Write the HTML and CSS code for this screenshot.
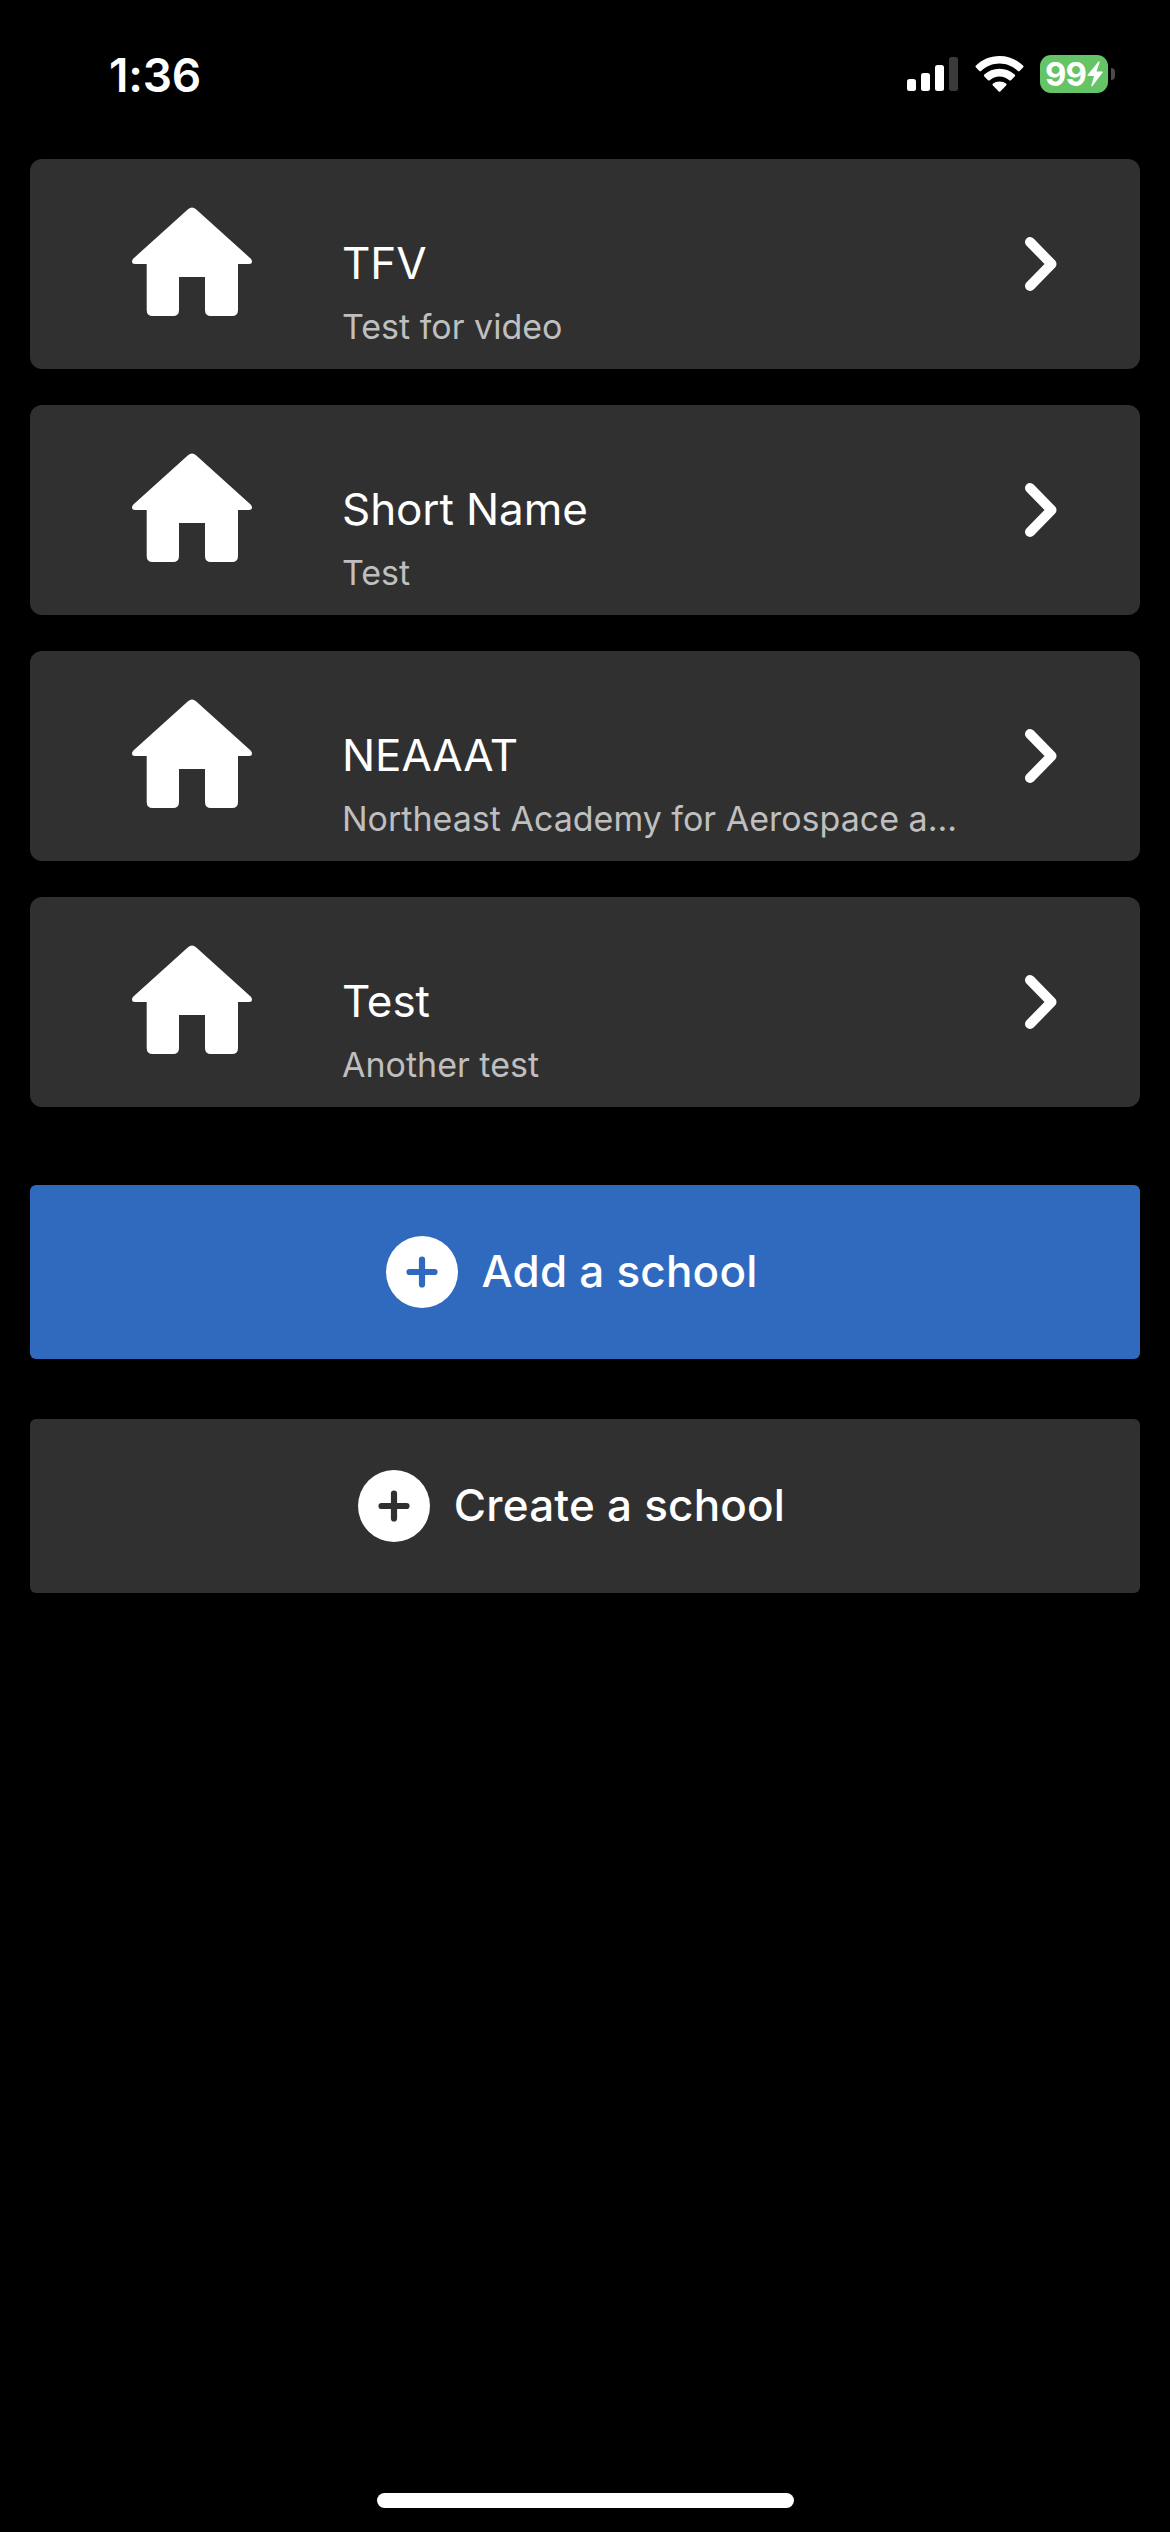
FILE: index.html
```
<!DOCTYPE html>
<html lang="en">
<head>
    <meta charset="UTF-8">
    <title>Schools</title>
    <link rel="stylesheet" href="styles.css">
</head>
<body>
    <!-- shared icons -->
    <svg class="icon-defs" width="0" height="0">
        <symbol id="icon-home" viewBox="0 0 120 110">
            <path d="M56 2.2Q60 -1.2 64 2.2L118.600 51.500Q120 53 120 54.500Q120 57 117 57H106V103Q106 109 100 109H79Q73 109 73 103V70H47V103Q47 109 41 109H20.700Q14.700 109 14.700 103V57H3Q0 57 0 54.500Q0 53 1.400 51.500Z"/>
        </symbol>
        <symbol id="icon-chevron" viewBox="0 0 34 56">
            <path d="M6 6L27.500 28L6 50" fill="none" stroke="#fff" stroke-width="10" stroke-linecap="round" stroke-linejoin="round"/>
        </symbol>
        <symbol id="icon-plus" viewBox="0 0 72 72">
            <circle cx="36" cy="36" r="36" fill="#fff"/>
            <path d="M36 23.500V48.500M23.500 36H48.500" fill="none" stroke="currentColor" stroke-width="6.200" stroke-linecap="round"/>
        </symbol>
    </svg>

    <header class="status-bar">
        <span class="time">1:36</span>
        <div class="status-icons">
            <svg class="signal" viewBox="0 0 52 36">
                <rect x="0" y="23" width="9" height="12" rx="2.500"/>
                <rect x="14" y="17" width="9" height="18" rx="2.500"/>
                <rect x="28" y="9" width="9" height="26" rx="2.500"/>
                <rect class="dim" x="42" y="1" width="9" height="34" rx="2.500"/>
            </svg>
            <svg class="wifi" viewBox="0 0 49 36">
                <path d="M24.500 0C34 0 42 3.700 48 9.600Q49 10.600 48 11.600L44.600 15Q43.800 15.700 42.900 15C37.700 10.300 31.300 7.600 24.500 7.600S11.300 10.300 6.100 15Q5.200 15.700 4.400 15L1 11.600Q0 10.600 1 9.600C7 3.700 15 0 24.500 0Z"/>
                <path d="M24.500 12.800C30.600 12.800 35.800 15 39.700 18.600Q40.700 19.500 39.700 20.500L36 24.200Q35.200 25 34.300 24.200C31.500 21.900 28.200 20.500 24.500 20.500S17.500 21.900 14.700 24.200Q13.800 25 13 24.200L9.300 20.500Q8.300 19.500 9.300 18.600C13.200 15 18.400 12.800 24.500 12.800Z"/>
                <path d="M24.500 25.600C27.100 25.600 29.200 26.300 31 27.600Q32 28.500 31.100 29.500L25.500 35.200Q24.500 36.200 23.500 35.200L17.900 29.500Q17 28.500 18 27.600C19.800 26.300 21.900 25.600 24.500 25.600Z"/>
            </svg>
            <div class="battery">
                <span class="battery-level">99</span>
                <svg class="bolt" viewBox="0 0 16 26">
                    <path d="M11.500 0.500L0.500 14Q0 15 1.200 15H7L4.300 24.500Q4.300 26 5.500 25L15.600 11.500Q16 10.500 15 10.500H9.500L12.600 1.200Q12.600 0 11.500 0.500Z"/>
                </svg>
            </div>
            <div class="battery-tip"></div>
        </div>
    </header>

    <main class="container">
        <div class="school-list">
            <a class="school-card">
                <svg class="home"><use href="#icon-home"/></svg>
                <div class="school-text">
                    <h2>TFV</h2>
                    <p>Test for video</p>
                </div>
                <svg class="chevron"><use href="#icon-chevron"/></svg>
            </a>
            <a class="school-card">
                <svg class="home"><use href="#icon-home"/></svg>
                <div class="school-text">
                    <h2>Short Name</h2>
                    <p>Test</p>
                </div>
                <svg class="chevron"><use href="#icon-chevron"/></svg>
            </a>
            <a class="school-card">
                <svg class="home"><use href="#icon-home"/></svg>
                <div class="school-text">
                    <h2>NEAAAT</h2>
                    <p>Northeast Academy for Aerospace a...</p>
                </div>
                <svg class="chevron"><use href="#icon-chevron"/></svg>
            </a>
            <a class="school-card">
                <svg class="home"><use href="#icon-home"/></svg>
                <div class="school-text">
                    <h2>Test</h2>
                    <p>Another test</p>
                </div>
                <svg class="chevron"><use href="#icon-chevron"/></svg>
            </a>
        </div>

        <div class="actions">
            <button class="btn btn-add">
                <svg class="plus"><use href="#icon-plus"/></svg>
                <span>Add a school</span>
            </button>
            <button class="btn btn-create">
                <svg class="plus"><use href="#icon-plus"/></svg>
                <span>Create a school</span>
            </button>
        </div>
    </main>

    <footer class="home-indicator"></footer>
</body>
</html>
```
FILE: styles.css
```
* {
    margin: 0;
    padding: 0;
    box-sizing: border-box;
    font-family: 'Inter', 'Liberation Sans', sans-serif;
}

body {
    background: #000;
    color: #fff;
    height: 2532px;
    display: flex;
    flex-direction: column;
    overflow: hidden;
}

.icon-defs {
    position: absolute;
}

/* Status bar */
.status-bar {
    height: 159px;
    padding: 45px 55px 0 109px;
    display: flex;
    justify-content: space-between;
    align-items: flex-start;
}

.time {
    font-size: 46px;
    font-weight: 600;
    line-height: 60px;
    letter-spacing: -0.2px;
}

.status-icons {
    height: 58px;
    display: flex;
    align-items: center;
}

.signal {
    width: 52px;
    height: 36px;
    margin-right: 16px;
    fill: #fff;
}

.signal .dim {
    fill: #3a3a3a;
}

.wifi {
    width: 49px;
    height: 36px;
    margin-right: 16px;
    fill: #fff;
}

.battery {
    width: 68px;
    height: 38px;
    padding-left: 5px;
    border-radius: 11px;
    background: #65c466;
    display: flex;
    align-items: center;
}

.battery-level {
    width: 42px;
    font-size: 33px;
    font-weight: 700;
    line-height: 38px;
    letter-spacing: -1px;
}

.bolt {
    width: 16px;
    height: 26px;
    fill: #fff;
}

.battery-tip {
    width: 4px;
    height: 12px;
    margin-left: 3px;
    border-radius: 0 4px 4px 0;
    background: #4a4a4a;
}

/* School list */
.container {
    flex: 1;
    padding: 0 30px;
}

.school-list {
    display: flex;
    flex-direction: column;
    gap: 36px;
}

.school-card {
    height: 210px;
    padding: 0 82px 0 102px;
    border-radius: 12px;
    background: #303030;
    display: flex;
    align-items: center;
}

.home {
    width: 120px;
    height: 110px;
    margin-bottom: 4px;
    fill: #fff;
}

.school-text {
    flex: 1;
    align-self: flex-start;
    padding: 74px 0 0 90px;
    white-space: nowrap;
}

.school-text h2 {
    font-size: 44px;
    font-weight: 400;
    line-height: 60px;
    letter-spacing: -0.1px;
}

.school-text p {
    color: #bfbfbf;
    font-size: 34px;
    line-height: 44px;
    margin-top: 12px;
}

.chevron {
    width: 34px;
    height: 56px;
}

/* Buttons */
.actions {
    margin-top: 78px;
    display: flex;
    flex-direction: column;
    gap: 60px;
}

.btn {
    height: 174px;
    padding-right: 27px;
    border: none;
    border-radius: 6px;
    display: flex;
    justify-content: center;
    align-items: center;
    gap: 24px;
    color: #fff;
    font-size: 44px;
    font-weight: 500;
    letter-spacing: 0.2px;
}

.btn span {
    margin-top: -3px;
}

.btn-add {
    background: #2f6abf;
}

.btn-create {
    background: #303030;
}

.plus {
    width: 72px;
    height: 72px;
}

.btn-add .plus {
    color: #2f6abf;
}

.btn-create .plus {
    color: #303030;
}

.home-indicator {
    width: 417px;
    height: 15px;
    margin: 0 auto 24px;
    border-radius: 8px;
    background: #fff;
}
```
